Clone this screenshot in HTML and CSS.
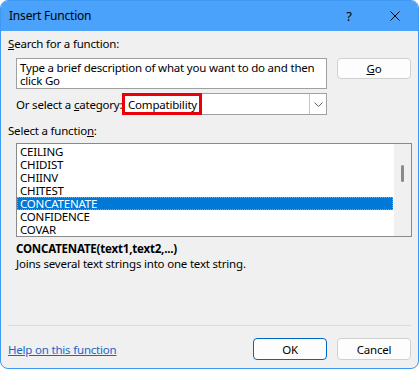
FILE: index.html
```html
<!DOCTYPE html>
<html lang="en">
  <head>
    <meta charset="UTF-8" />
    <title>Insert Function</title>
    <link rel="stylesheet" href="styles.css">
  </head>
  <body>
    <div class="dialog">
      <div class="titlebar">
        <span class="title">Insert Function</span>
        <span class="tb-btn help">?</span>
        <span class="tb-btn close">
          <svg width="10" height="10" viewBox="0 0 10 10">
            <path d="M0.5 0.5 L9.5 9.5 M9.5 0.5 L0.5 9.5" stroke="#000" stroke-width="1" fill="none" />
          </svg>
        </span>
      </div>

      <div class="content">
        <div class="label"><u>S</u>earch for a function:</div>
        <div class="search-row">
          <div class="search-box">Type a brief description of what you want to do and then click Go</div>
          <button class="btn"><u>G</u>o</button>
        </div>

        <div class="category-row">
          <span class="category-label">Or select a <u>c</u>ategory:</span>
          <div class="select">
            <span class="select-value">Compatibility</span>
            <span class="select-arrow">
              <svg width="9" height="5" viewBox="0 0 9 5">
                <path d="M0.5 0.5 L4.5 4.5 L8.5 0.5" stroke="#606060" stroke-width="1" fill="none" />
              </svg>
            </span>
            <span class="highlight"></span>
          </div>
        </div>

        <div class="label label-list">Select a functio<u>n</u>:</div>
        <div class="listbox">
          <ul class="items">
            <li>CEILING</li>
            <li>CHIDIST</li>
            <li>CHIINV</li>
            <li>CHITEST</li>
            <li class="selected">CONCATENATE</li>
            <li>CONFIDENCE</li>
            <li>COVAR</li>
          </ul>
          <div class="scrollbar"><span class="thumb"></span></div>
        </div>

        <div class="syntax">CONCATENATE(text1,text2,...)</div>
        <div class="desc">Joins several text strings into one text string.</div>
      </div>

      <div class="footer">
        <div class="separator"></div>
        <div class="footer-row">
          <a href="#" class="help-link">Help on this function</a>
          <button class="btn btn-default">OK</button>
          <button class="btn">Cancel</button>
        </div>
      </div>
    </div>
  </body>
</html>
```

FILE: styles.css
```css
body {
  margin: 0;
  background-color: #fff;
  font-family: "Noto Sans", "Open Sans", sans-serif;
  font-size: 11.5px;
  letter-spacing: -0.2px;
  color: #000;
}

.dialog {
  width: 419px;
  height: 369px;
  box-sizing: border-box;
  border: 1px solid #3d99f4;
  border-radius: 8px;
  overflow: hidden;
  background-color: #f0f0f0;
  display: flex;
  flex-direction: column;
}

/* title bar */
.titlebar {
  height: 30px;
  background-color: #4aa2fb;
  display: flex;
  align-items: center;
  padding-left: 8px;
}

.title {
  flex: 1;
  line-height: 16px;
  font-size: 12px;
}

.tb-btn {
  width: 46px;
  height: 30px;
  display: flex;
  align-items: center;
  justify-content: center;
}

.help {
  font-size: 13px;
  padding-left: 1px;
}

/* content */
.content {
  flex: 1;
  padding: 0 7px;
}

.label {
  line-height: 15px;
  margin-top: 5px;
}

.label-list {
  margin-top: 8px;
}

.search-row {
  display: flex;
  align-items: flex-start;
  margin: 7px 0 0 8px;
}

.search-box {
  width: 311px;
  height: 31px;
  box-sizing: border-box;
  border: 1px solid #a0a0a0;
  background-color: #fff;
  padding: 2px 3px 0;
  line-height: 13px;
}

.btn {
  width: 74px;
  height: 22px;
  margin-left: 10px;
  padding: 0;
  font-family: inherit;
  font-size: 11.5px;
  letter-spacing: -0.2px;
  color: #000;
  background-color: #fdfdfd;
  border: 1px solid #d0d0d0;
  border-radius: 4px;
}

.search-row .btn {
  height: 21px;
}

.btn-default {
  border-color: #0067c0;
}

.category-row {
  display: flex;
  align-items: center;
  margin: 4px 0 0 8px;
  height: 22px;
}

.category-label {
  width: 106px;
  line-height: 15px;
  white-space: nowrap;
}

.select {
  position: relative;
  width: 205px;
  height: 22px;
  box-sizing: border-box;
  border: 1px solid #a0a0a0;
  background-color: #fff;
  display: flex;
  align-items: center;
}

.select-value {
  flex: 1;
  padding-left: 5px;
  line-height: 15px;
}

.select-arrow {
  width: 16px;
  height: 20px;
  border-left: 1px solid #c8c8c8;
  display: flex;
  align-items: center;
  justify-content: center;
}

/* red annotation box over the select */
.highlight {
  position: absolute;
  left: -1px;
  top: -1px;
  width: 80px;
  height: 22px;
  box-sizing: border-box;
  border: 3px solid #e8000b;
}

/* function list */
.listbox {
  width: 396px;
  height: 94px;
  box-sizing: border-box;
  margin: 5px 0 0 8px;
  border: 1px solid #8a8a8a;
  background-color: #fff;
  display: flex;
}

.items {
  list-style: none;
  margin: 0;
  padding: 1px 0 0;
  flex: 1;
}

.items li {
  height: 13px;
  line-height: 13px;
  padding-left: 3px;
  margin-right: 1px;
}

.items li.selected {
  background-color: #0078d7;
  color: #fff;
  outline: 1px dotted #e8892a;
  outline-offset: -1px;
}

.scrollbar {
  width: 17px;
  background-color: #f0f0f0;
  position: relative;
}

.thumb {
  position: absolute;
  left: 7px;
  top: 21px;
  width: 3px;
  height: 17px;
  border-radius: 2px;
  background-color: #8a8a8a;
}

.syntax {
  font-weight: bold;
  line-height: 15px;
  margin: 4px 0 0 8px;
}

.desc {
  line-height: 15px;
  margin-left: 8px;
}

/* footer */
.separator {
  height: 1px;
  margin: 0 7px;
  background-color: #dadada;
}

.footer-row {
  display: flex;
  align-items: center;
  padding: 12px 7px 8px;
}

.help-link {
  flex: 1;
  color: #1a66c8;
  line-height: 15px;
}

.footer-row .btn {
  height: 22px;
}
```
